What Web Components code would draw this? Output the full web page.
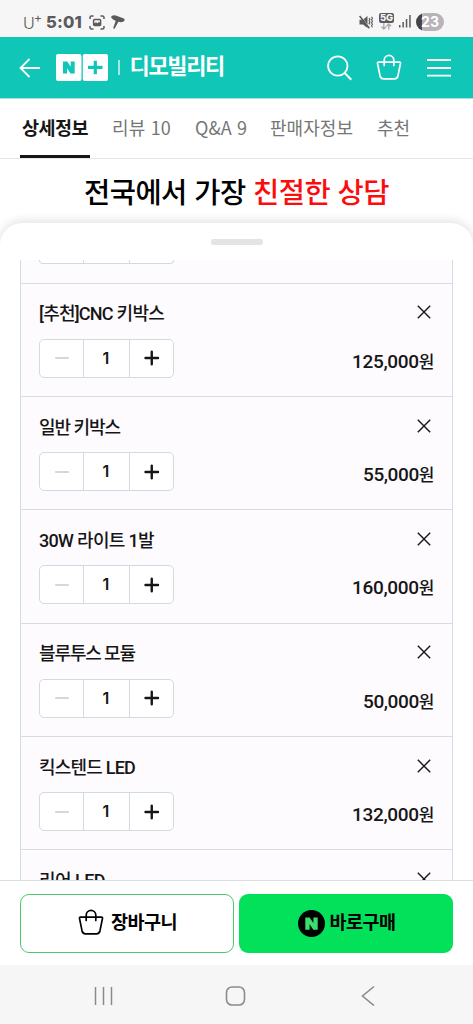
<!DOCTYPE html>
<html lang="ko">
<head>
<meta charset="utf-8">
<title>디모빌리티</title>
<style>
body{margin:0;background:#fff;font-family:Roboto,"Noto Sans CJK KR",sans-serif;color:#161616}
</style>
</head>
<body>
<shop-app></shop-app>
<script>
const define = (name, html, setup) => customElements.define(name, class extends HTMLElement {
  connectedCallback() {
    if (this.shadowRoot) return;
    this.attachShadow({mode: 'open'}).innerHTML = typeof html === 'function' ? html(this) : html;
    if (setup) setup(this);
  }
});

/* One line of text whose tracking is adjusted to a given advance width. */
define('fit-text', '<style>:host{display:block;white-space:nowrap}span{display:inline-block}</style><span><slot></slot></span>', el => {
  const w = +el.getAttribute('w');
  el.style.width = w + 'px';
  const span = el.shadowRoot.querySelector('span');
  const n = [...el.textContent].length;
  span.style.letterSpacing = ((w - span.getBoundingClientRect().width) / n) + 'px';
});

define('basket-icon', `<style>:host{display:block;width:26px;height:26px}svg{display:block}</style>
<svg width="26" height="26" viewBox="0 0 26 26" fill="none" stroke="currentColor" stroke-width="1.7" stroke-linejoin="round" stroke-linecap="round"><path d="M2.400 8.200H23.600Q24.700 8.200 24.500 9.300L22 21.700Q21.300 24.800 18.500 24.800H7.500Q4.700 24.800 4 21.700L1.500 9.300Q1.300 8.200 2.400 8.200Z"/><path d="M8.200 11.400V6.200a4.800 4.800 0 0 1 9.600 0V11.400"/></svg>`);

define('status-bar', `<style>
:host{display:flex;height:37px;background:#f6f6f6;color:#5c5a5c;box-sizing:border-box;padding:14px 0 0 23px;align-items:flex-start}
.u{font:300 16px/18px Inter,sans-serif;width:11px}.p{font:400 12px/10px Inter,sans-serif;width:9px;margin-top:-1px}
.t{font:800 16.5px/17px Inter,sans-serif;margin-left:3px}
svg{display:block}.s1{margin-left:7px;margin-top:1px}.s2{margin-left:6px;margin-top:1px}
.right{margin-left:auto;display:flex;padding-right:29px}
.net{width:15px;margin-left:6px;margin-top:-1px}
.g{font:800 9.500px/10px Inter,sans-serif;background:#5c5a5c;color:#f6f6f6;border-radius:2px;text-align:center;height:10px;letter-spacing:-.2px}
.sig{margin:1px 5px 0 5px}
.bat{width:28px;height:18px;margin-top:-1px;border-radius:9px;background:linear-gradient(90deg,#464446 6px,#b8b3b8 6px);color:#fff;font:700 14px/18px Inter,sans-serif;text-align:center}
</style>
<span class="u">U</span><span class="p">+</span><fit-text class="t" w="36">5:01</fit-text>
<svg class="s1" width="16" height="15" viewBox="0 0 16 15" fill="none" stroke="currentColor" stroke-width="1.5"><path d="M1 4V2.500Q1 1 2.500 1H4.500M11.500 1h2Q15 1 15 2.500V4M15 11v1.500Q15 14 13.500 14H11.500M4.500 14H2.500Q1 14 1 12.500V11"/><rect x="4.600" y="4.600" width="7" height="6" rx="1"/><path d="M5 10V8.500l2-1.200 1.500.9 1.500-1.400 1.600 1.500V10Z" fill="currentColor" stroke="none"/></svg>
<svg class="s2" width="14" height="14" viewBox="0 0 14 14" fill="currentColor"><path d="M.6.900Q3-.5 5.500.700L12.800 3.600Q14.300 4.600 13 6.300Q10.500 8 7.400 6.800L3.600 13.800 2.100 13.200 4.700 6Q1.200 4.600.1 2.600Z"/></svg>
<div class="right">
<svg style="margin-top:1px" width="14" height="14" viewBox="0 0 14 14"><path d="M.5 4.700H4L8.500 1V13L4 9.500H.5Z" fill="currentColor"/><path d="M1.200.8 11 13" stroke="#f6f6f6" stroke-width="1"/><path d="M.6 1 10.400 13.300" stroke="currentColor" stroke-width="1.500"/><path d="M10 3l1 1.300-1 1.300 1 1.300-1 1.300 1 1.300M12.500 1.700l1 1.500-1 1.500 1 1.500-1 1.500 1 1.500-1 1.500 1 1.500" fill="none" stroke="currentColor" stroke-width="1.100"/></svg>
<div class="net"><div class="g">5G</div><svg width="15" height="7" viewBox="0 0 15 7" fill="none" stroke="#aaa6aa" stroke-width="1.300"><path d="M4.800 0V6M2.500 3.600 4.800 6 7.100 3.600M9.800 6.500V1M7.500 3.200 9.800.9 12.100 3.200"/></svg></div>
<svg class="sig" width="12" height="13" viewBox="0 0 12 13" fill="currentColor"><rect y="10" width="1.500" height="2.500"/><rect x="3.400" y="7" width="1.500" height="5.500"/><rect x="6.800" y="4" width="1.500" height="8.500"/><rect x="10.200" width="1.500" height="12.500"/></svg>
<div class="bat">23</div></div>`);

define('shop-header', `<style>
:host{display:flex;align-items:center;height:61px;background:#10c6b7;border-bottom:1px solid #a8e4df;color:#fff;box-sizing:content-box;padding-left:18.500px}
svg{display:block}.logo{margin-left:15.500px}.bar{width:1.500px;height:15px;background:#a5e8e2;margin-left:10px}
.name{font-weight:700;font-size:22px;line-height:30px;margin-left:10px;margin-top:-1px}
.acts{margin-left:auto;display:flex;align-items:center;padding-right:22.500px}
basket-icon{margin:0 25px 1px 24px}
</style>
<svg width="22" height="20" viewBox="0 0 22 20" fill="none" stroke="currentColor" stroke-width="1.800"><path d="M10.500 1 1.500 10l9 9M1.500 10H21"/></svg>
<svg class="logo" width="52" height="27" viewBox="0 0 52 27"><rect width="25.500" height="27" rx="2" fill="#fff"/><rect x="26.800" width="25.200" height="27" rx="2" fill="#fff"/><path d="M7 7.500h4.300l3.400 5.200V7.500h4v12h-4.200l-3.400-5.200v5.200H7ZM37.700 6.800h3.200v3h-3.200ZM32 11.800h14.500v3.200H32ZM37.700 17h3.200v3.200h-3.200ZM37.700 9.500h3.200v8h-3.200Z" fill="#10c6b7"/></svg>
<i class="bar"></i><fit-text class="name" w="94.500">디모빌리티</fit-text>
<div class="acts">
<svg width="25" height="26" viewBox="0 0 25 26" fill="none" stroke="currentColor" stroke-width="1.800"><circle cx="10.800" cy="11" r="9.700"/><path d="M17.700 18 24.300 24.700" stroke-width="2"/></svg>
<basket-icon></basket-icon>
<svg width="24" height="18" viewBox="0 0 24 18" stroke="currentColor" stroke-width="1.800"><path d="M0 1H24M0 9H24M0 16.700H24"/></svg></div>`);

define('shop-tabs', `<style>
:host{display:flex;border-bottom:1px solid #e8e8e8;padding-left:20px;font:400 18px/57px "Noto Sans CJK KR",sans-serif;color:#767676;box-sizing:border-box;height:60px}
fit-text{margin-left:24px}.on{margin:0;padding:0 2px;font-weight:700;font-size:18.500px;color:#161616;border-bottom:3px solid #161616;height:56px}
</style><fit-text class="on" w="66">상세정보</fit-text><fit-text style="margin-left:22px" w="59">리뷰 10</fit-text><fit-text w="52">Q&amp;A 9</fit-text><fit-text style="margin-left:23px" w="83">판매자정보</fit-text><fit-text w="33">추천</fit-text>`);

define('promo-line', `<style>:host{display:block;height:64px;padding:8px 0 0 84px;box-sizing:border-box;font:500 28.500px/48px "Noto Sans CJK KR",sans-serif;color:#000}b{font-weight:inherit;color:#fb0d0d}</style><fit-text w="305">전국에서 가장 <b>친절한 상담</b></fit-text>`);

define('qty-box', el => `<style>
:host{display:flex;width:135px;height:39px;border:1px solid #d3dadf;border-radius:5px;background:#fff;box-sizing:border-box}
div{display:flex;align-items:center;justify-content:center;width:43px}
.n{width:47px;box-sizing:border-box;border:solid #d3dadf;border-width:0 1px;font:600 16px/20px Inter,sans-serif;padding:0 1px 1px 0}
svg{display:block}
</style><div><svg width="16" height="16" stroke="#d6d6dc" stroke-width="2.200" stroke-linecap="round"><path d="M2 8H14"/></svg></div><div class="n">1</div><div><svg width="16" height="16" stroke="#161616" stroke-width="2.400" stroke-linecap="round"><path d="M1.500 8H14M7.750 1.750V14.250"/></svg></div>`);

define('option-row', el => `<style>
:host{display:block;height:113.330px;box-sizing:border-box;border-top:1px solid #d5dde3;padding:16.500px 18px 0}
.top,.bot{display:flex;justify-content:space-between}
.top{height:38.500px;font-weight:500;font-size:18px;line-height:27px}
.price{font-weight:500;font-size:19px;line-height:24px;margin-top:11px}
.won{font-size:17px;font-weight:500}
.x{margin:5px 3px 0 0;display:block}
</style><div class="top"><fit-text w="${el.getAttribute('w')}">${el.getAttribute('name')}</fit-text><svg class="x" width="14" height="14" stroke="#161616" stroke-width="1.400"><path d="M.8.800 13.200 13.200M13.200.800.8 13.200"/></svg></div>
<div class="bot"><qty-box></qty-box>${el.getAttribute('price') ? `<fit-text class="price" w="${el.getAttribute('pw')}">${el.getAttribute('price')}<span class="won">원</span></fit-text>` : ''}</div>`);

/* Lower edge of the quantity box of the row scrolled off the top. */
define('qty-tail', `<style>
:host{display:block;height:22.800px;padding-left:18px;flex:none}
div{display:flex;width:135px;height:4px;box-sizing:border-box;border:solid #d3dadf;border-width:0 1px 1px;border-radius:0 0 5px 5px;background:#fff}
i{width:47px;margin-left:43px;box-sizing:border-box;border:solid #d3dadf;border-width:0 1px}
</style><div><i></i></div>`);

define('option-sheet', `<style>
:host{display:block;height:657px;background:#fff;border-radius:22px 22px 0 0;box-shadow:0 -2px 10px rgba(70,40,50,.15)}
.grip{display:block;width:52px;height:6px;border-radius:2px;background:#e4e4e4;margin:0 auto}
.head{padding-top:16px;height:37px;box-sizing:border-box}
.list{height:620px;overflow:hidden;margin:0 20px;border:solid #d5dde3;border-width:0 1px;background:#fefbff;display:flex;flex-direction:column}
option-row{flex:none}
</style><div class="head"><i class="grip"></i></div><div class="list">
<qty-tail></qty-tail>
<option-row name="[추천]CNC 키박스" w="125" price="125,000" pw="82"></option-row>
<option-row name="일반 키박스" w="81" price="55,000" pw="71"></option-row>
<option-row name="30W 라이트 1발" w="115" price="160,000" pw="82"></option-row>
<option-row name="블루투스 모듈" w="96" price="50,000" pw="71"></option-row>
<option-row name="킥스텐드 LED" w="96" price="132,000" pw="82"></option-row>
<option-row name="리어 LED" w="66"></option-row>
</div>`);

define('buy-bar', `<style>
:host{display:flex;gap:5px;height:85px;box-sizing:border-box;border-top:1px solid #dcdfe2;padding:12.500px 20px;background:#fff;position:relative}
div{width:214px;height:59px;box-sizing:border-box;border-radius:9px;display:flex;align-items:center;justify-content:center;font-weight:700;font-size:18.500px;line-height:28px;color:#000}
.cart{border:1px solid #4cc96f}.buy{background:#03e15b}
fit-text{margin:0 0 0 7px}.buy fit-text{margin-left:5px}svg{display:block}
.cart,.buy{padding-left:1px}basket-icon{margin-bottom:2px}
</style><div class="cart"><basket-icon></basket-icon><fit-text w="66">장바구니</fit-text></div>
<div class="buy"><svg width="27" height="27" viewBox="0 0 27 27"><circle cx="13.500" cy="13.500" r="13.500" fill="#000"/><path d="M7.300 7.500h4.300l3.800 5.500V7.500h4.300v12.300h-4.300l-3.800-5.600v5.600H7.300Z" fill="#39df6c"/></svg><fit-text w="66">바로구매</fit-text></div>`);

define('system-nav', `<style>:host{display:flex;height:59px;background:#f6f6f6;padding:20px 98px 0 94px;box-sizing:border-box;justify-content:space-between}svg{display:block}.home{margin-right:3px}</style>
<svg width="19" height="21" stroke="#8b8b8b" stroke-width="1.500"><path d="M1.500 2V20M9.500 2V20M17.500 2V20"/></svg>
<svg class="home" width="21" height="21" fill="none" stroke="#8b8b8b" stroke-width="1.600"><rect x="1.500" y="2" width="18" height="18" rx="5.500"/></svg>
<svg width="14" height="21" fill="none" stroke="#8b8b8b" stroke-width="1.600"><path d="M13 1.500 1.500 11 13 20.500"/></svg>`);

define('shop-app', `<style>:host{display:flex;flex-direction:column;width:473px;height:1024px;overflow:hidden}status-bar,shop-header,shop-tabs,promo-line,option-sheet,buy-bar,system-nav{flex:none}</style>
<status-bar></status-bar><shop-header></shop-header><shop-tabs></shop-tabs><promo-line></promo-line><option-sheet></option-sheet><buy-bar></buy-bar><system-nav></system-nav>`);
</script>
</body>
</html>
